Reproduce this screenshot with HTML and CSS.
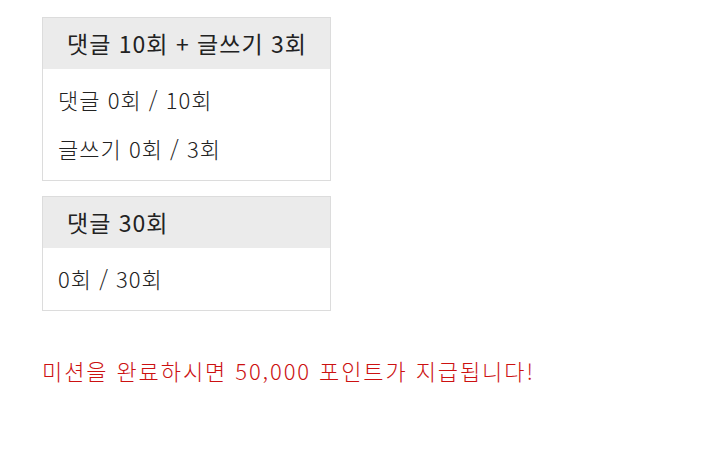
FILE: index.html
```html
<!DOCTYPE html>
<html lang="ko">
<head>
    <meta charset="UTF-8">
    <title>미션</title>
    <link rel="stylesheet" href="styles.css">
</head>
<body>
    <div class="mission">
        <div class="mission-box">
            <div class="mission-head">댓글 10회 + 글쓰기 3회</div>
            <div class="mission-body">
                <p class="mission-row">댓글 0회 / 10회</p>
                <p class="mission-row">글쓰기 0회 / 3회</p>
            </div>
        </div>
        <div class="mission-box">
            <div class="mission-head">댓글 30회</div>
            <div class="mission-body">
                <p class="mission-row">0회 / 30회</p>
            </div>
        </div>
        <p class="mission-note">미션을 완료하시면 50,000 포인트가 지급됩니다!</p>
    </div>
</body>
</html>
```

FILE: styles.css
```css
body {
    margin: 0;
    background: #fff;
    font-family: "Noto Sans CJK KR", "Noto Sans", sans-serif;
    color: #333;
}
.mission {
    padding: 17px 0 0 42px;
}
.mission-box {
    width: 287px;
    border: 1px solid #dcdcdc;
    margin-bottom: 15px;
}
.mission-head {
    height: 51px;
    line-height: 51px;
    padding-left: 24px;
    background: #ebebeb;
    font-size: 23px;
    letter-spacing: 1px;
    color: #222;
}
.mission-body {
    padding: 6px 15px 7px 15px;
}
.mission-row {
    margin: 0;
    height: 49px;
    line-height: 49px;
    font-size: 22px;
    font-weight: 300;
    letter-spacing: 1px;
    color: #222;
}
.mission-note {
    margin: 44px 0 0;
    line-height: 30px;
    font-size: 22px;
    font-weight: 300;
    letter-spacing: 1.9px;
    color: #cc1111;
}
```
